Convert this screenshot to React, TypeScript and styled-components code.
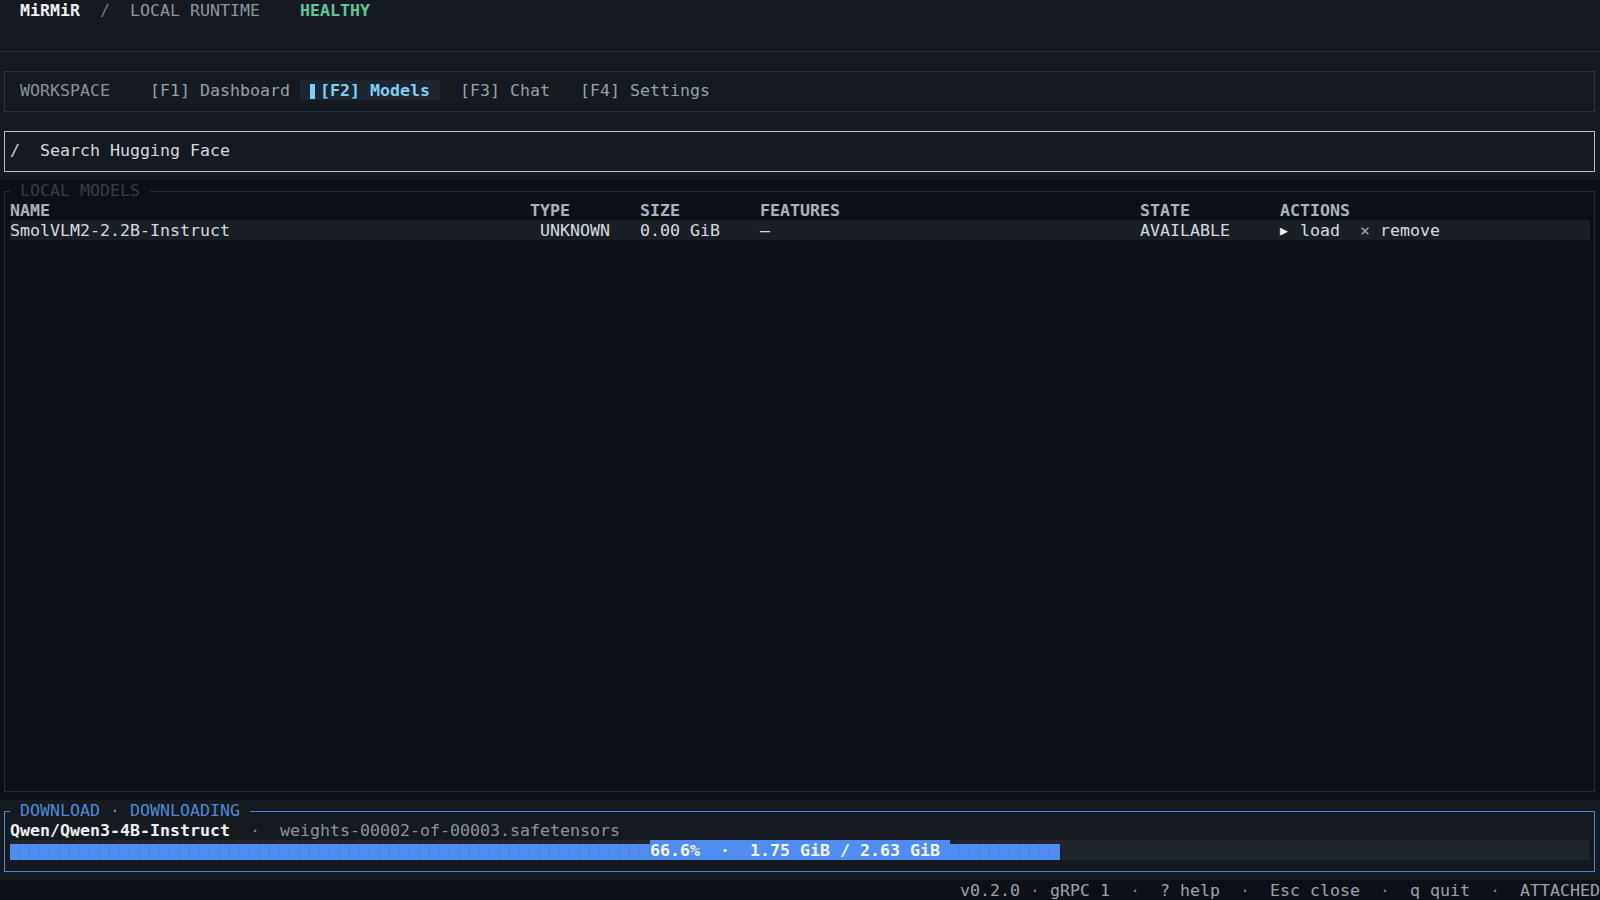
import React from "react";
import styled, { createGlobalStyle } from "styled-components";

const GlobalStyle = createGlobalStyle`
  * { box-sizing: border-box; }
  html, body {
    margin: 0;
    padding: 0;
    background: #0d1016;
  }
  body {
    font-family: "DejaVu Sans Mono", "Liberation Mono", monospace;
    font-size: 16.61px;
    line-height: 22px;
    color: #d5dbe1;
  }
`;

const tabs = [
  { key: "F1", label: "Dashboard" },
  { key: "F2", label: "Models" },
  { key: "F3", label: "Chat" },
  { key: "F4", label: "Settings" },
];

const models = [
  {
    name: "SmolVLM2-2.2B-Instruct",
    type: "UNKNOWN",
    size: "0.00 GiB",
    features: "—",
    state: "AVAILABLE",
  },
];

const download = {
  repo: "Qwen/Qwen3-4B-Instruct",
  file: "weights-00002-of-00003.safetensors",
  done: 1.75,
  total: 2.63,
  pct: 66.6,
};

const statusItems = ["gRPC 1", "? help", "Esc close", "q quit", "ATTACHED"];

const App = () => {
  const cells = 158;
  const filled = Math.round((download.pct / 100) * cells);

  return (
    <>
      <GlobalStyle />
      <Screen>
        <TopSection>
          <TitleBar>
            <Brand>MiRMiR</Brand>
            <Slash>/</Slash>
            <Runtime>LOCAL RUNTIME</Runtime>
            <Health>HEALTHY</Health>
          </TitleBar>
          <Divider />
          <TabsBox>
            <Workspace>WORKSPACE</Workspace>
            {tabs.map((t) => {
              const active = t.key === "F2";
              return (
                <Tab key={t.key} $active={active}>
                  <Marker>{active && <MarkerBar />}</Marker>[{t.key}] {t.label}
                </Tab>
              );
            })}
          </TabsBox>
          <SearchBox>
            <Prompt>/</Prompt>
            <SearchText>Search Hugging Face</SearchText>
          </SearchBox>
        </TopSection>

        <MainSection>
          <Frame $tone="dim">
            <FrameHead>
              <Corner />
              <FrameTitle>LOCAL MODELS</FrameTitle>
              <Rule />
            </FrameHead>
            <FrameBody>
              <TableRow $head>
                <span>NAME</span>
                <span>TYPE</span>
                <span>SIZE</span>
                <span>FEATURES</span>
                <span>STATE</span>
                <span>ACTIONS</span>
              </TableRow>
              {models.map((m) => (
                <TableRow key={m.name} $selected>
                  <span>{m.name}</span>
                  <TypeCell>{m.type}</TypeCell>
                  <span>{m.size}</span>
                  <span>{m.features}</span>
                  <span>{m.state}</span>
                  <Actions>
                    <Action>
                      <Glyph $tone="bright">▶</Glyph>load
                    </Action>
                    <Action>
                      <Glyph>×</Glyph>remove
                    </Action>
                  </Actions>
                </TableRow>
              ))}
            </FrameBody>
          </Frame>
        </MainSection>

        <DownloadSection>
          <Frame $tone="blue">
            <FrameHead>
              <Corner />
              <FrameTitle>DOWNLOAD · DOWNLOADING</FrameTitle>
              <Rule />
            </FrameHead>
            <FrameBody>
              <FileLine>
                <Repo>{download.repo}</Repo>
                <Dot>  ·  </Dot>
                <FileName>{download.file}</FileName>
              </FileLine>
              <Track>
                <Fill style={{ width: filled * 10 }} />
                <ProgressLabel>
                  {download.pct.toFixed(1)}%  ·  {download.done.toFixed(2)} GiB /{" "}
                  {download.total.toFixed(2)} GiB
                </ProgressLabel>
              </Track>
            </FrameBody>
          </Frame>
        </DownloadSection>

        <StatusBar>
          <span>v0.2.0</span>
          <StatusSep> · </StatusSep>
          {statusItems.map((s, i) => (
            <React.Fragment key={s}>
              {i > 0 && <StatusSep>  ·  </StatusSep>}
              <span>{s}</span>
            </React.Fragment>
          ))}
        </StatusBar>
      </Screen>
    </>
  );
};

export default App;

const Screen = styled.div`
  width: 1600px;
  height: 900px;
  display: flex;
  flex-direction: column;
  overflow: hidden;
  white-space: pre;
`;

const TopSection = styled.div`
  height: 180px;
  flex: none;
  display: flex;
  flex-direction: column;
  background: #151920;
`;

const TitleBar = styled.div`
  height: 20px;
  display: flex;
  gap: 20px;
  padding-left: 20px;
`;

const Brand = styled.span`
  color: #eef1f4;
  font-weight: bold;
`;

const Slash = styled.span`
  color: #6e7883;
`;

const Runtime = styled.span`
  color: #8c96a1;
`;

const Health = styled.span`
  color: #5cc79a;
  font-weight: bold;
  margin-left: 20px;
`;

const Divider = styled.div`
  height: 1px;
  margin-top: 31px;
  background: #262e38;
`;

const TabsBox = styled.div`
  height: 41px;
  margin: 19px 5px 0 4px;
  padding: 8px 0 0 15px;
  border: 1px solid #2b343f;
  display: flex;
  align-items: flex-start;
`;

const Workspace = styled.span`
  color: #8a939d;
  margin-right: 20px;
`;

const Tab = styled.span<{ $active?: boolean }>`
  display: flex;
  height: 20px;
  padding: 0 10px;
  color: ${({ $active }) => ($active ? "#80d0f6" : "#97a1ab")};
  background: ${({ $active }) => ($active ? "#1d2630" : "transparent")};
  font-weight: ${({ $active }) => ($active ? "bold" : "normal")};
`;

const Marker = styled.span`
  width: 10px;
  height: 20px;
  display: flex;
  align-items: center;
`;

const MarkerBar = styled.span`
  width: 5px;
  height: 15px;
  margin-top: 3px;
  background: #80d0f6;
`;

const SearchBox = styled.div`
  height: 41px;
  margin: 19px 5px 0 4px;
  padding: 8px 0 0 5px;
  border: 1px solid #b9c1c9;
  display: flex;
  align-items: flex-start;
`;

const Prompt = styled.span`
  color: #c3cad1;
  margin-right: 20px;
`;

const SearchText = styled.span`
  color: #d3d9df;
`;

const MainSection = styled.div`
  flex: 1;
  display: flex;
  flex-direction: column;
  padding: 0 5px 8px 4px;
  background: #0d1016;
`;

const DownloadSection = styled.div`
  height: 80px;
  flex: none;
  display: flex;
  flex-direction: column;
  padding: 0 5px 8px 4px;
  background: #151920;
`;

const Frame = styled.div<{ $tone: "dim" | "blue" }>`
  flex: 1;
  display: flex;
  flex-direction: column;
  --line: ${({ $tone }) => ($tone === "blue" ? "#4a84d6" : "#252c35")};
  --title: ${({ $tone }) => ($tone === "blue" ? "#4f8ad9" : "#343d48")};
`;

const FrameHead = styled.div`
  height: 20px;
  display: flex;
`;

const Corner = styled.span`
  width: 6px;
  margin-top: 11px;
  border-top: 1px solid var(--line);
  border-left: 1px solid var(--line);
`;

const FrameTitle = styled.span`
  height: 20px;
  padding: 0 10px;
  color: var(--title);
`;

const Rule = styled.span`
  flex: 1;
  margin-top: 11px;
  border-top: 1px solid var(--line);
  border-right: 1px solid var(--line);
`;

const FrameBody = styled.div`
  flex: 1;
  padding: 0 4px 0 5px;
  border: 1px solid var(--line);
  border-top: none;
`;

const TableRow = styled.div<{ $head?: boolean; $selected?: boolean }>`
  display: grid;
  grid-template-columns: 520px 110px 120px 380px 140px 1fr;
  height: 20px;
  color: ${({ $head }) => ($head ? "#a9b2bb" : "#d5dbe1")};
  font-weight: ${({ $head }) => ($head ? "bold" : "normal")};
  background: ${({ $selected }) => ($selected ? "#1a1f26" : "transparent")};
`;

const TypeCell = styled.span`
  padding-left: 10px;
`;

const Actions = styled.span`
  display: flex;
  gap: 20px;
`;

const Action = styled.span`
  display: flex;
  color: #d5dbe1;
`;

const Glyph = styled.span<{ $tone?: "bright" }>`
  display: inline-block;
  width: 20px;
  font-size: ${({ $tone }) => ($tone === "bright" ? "13px" : "16.61px")};
  color: ${({ $tone }) => ($tone === "bright" ? "#eef1f4" : "#9aa3ac")};
`;

const FileLine = styled.div`
  height: 20px;
  display: flex;
`;

const Repo = styled.span`
  color: #eef1f4;
  font-weight: bold;
`;

const Dot = styled.span`
  color: #7c8690;
`;

const FileName = styled.span`
  color: #8b949e;
`;

const Track = styled.div`
  position: relative;
  height: 20px;
  display: flex;
  justify-content: center;
  background: #1f252d;
`;

const Fill = styled.div`
  position: absolute;
  left: 0;
  top: 4px;
  bottom: 0;
  background: repeating-linear-gradient(
    90deg,
    #4f8ef0 0 9px,
    #4684e4 9px 10px
  );
`;

const ProgressLabel = styled.span`
  position: relative;
  height: 20px;
  padding-right: 10px;
  background: #4f8ef0;
  color: #f2f6fc;
  font-weight: bold;
`;

const StatusBar = styled.div`
  height: 20px;
  flex: none;
  display: flex;
  justify-content: flex-end;
  color: #9aa3ac;
  background: #0d1016;
`;

const StatusSep = styled.span`
  color: #7c8690;
`;
